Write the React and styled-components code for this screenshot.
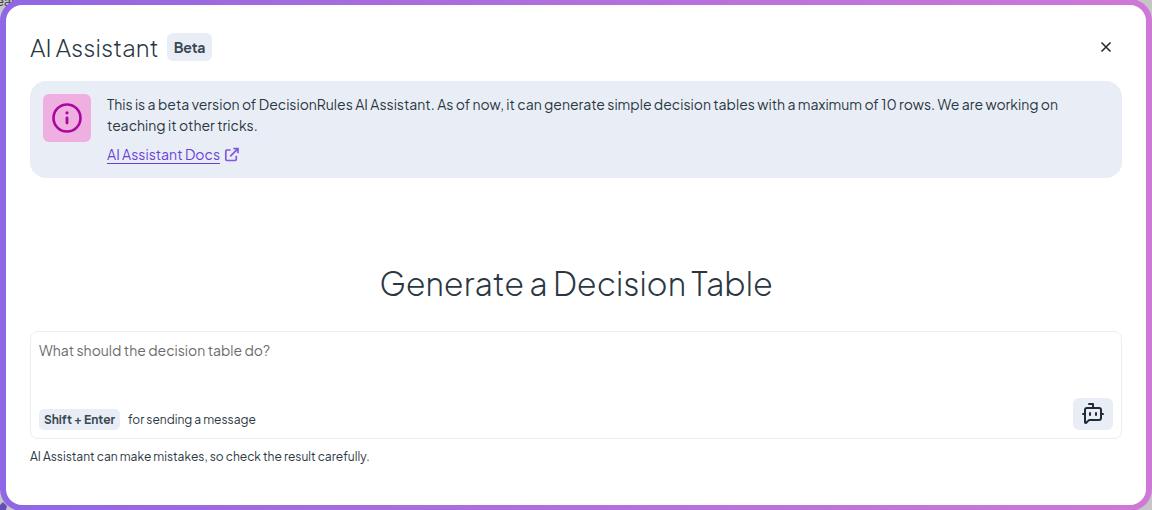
import React from "react";
import styled, { createGlobalStyle } from "styled-components";
import { BotMessageSquare } from "lucide-react";

const GlobalStyle = createGlobalStyle`
  * { box-sizing: border-box; }
  body { margin: 0; overflow: hidden; background: #c6c6c8; }
`;

const Page = styled.div`
  position: relative;
  height: 510px;
  overflow: hidden;
  background: #c6c6c8;
  font-family: "Plus Jakarta Sans", Inter, sans-serif;
  color: #2a3742;
`;

const Behind = styled.span`
  position: absolute;
  top: -7px;
  left: -4px;
  font-size: 13px;
  line-height: 16px;
  color: #333b45;
`;

const BehindMark = styled.svg`
  position: absolute;
  left: 0;
  bottom: 0;
`;

const Frame = styled.div`
  position: relative;
  height: 512px;
  margin-top: -1px;
  padding: 6px;
  border-radius: 22px;
  background: linear-gradient(90deg, #8f66e6 0%, #9a68e0 12%, #cf78d8 100%);
`;

const Dialog = styled.main`
  display: flex;
  flex-direction: column;
  height: 500px;
  padding: 28px 24px 0;
  border-radius: 16px;
  background: #fff;
`;

const Header = styled.header`
  display: flex;
  align-items: center;
  height: 28px;
`;

const Text = styled.span`
  font-size: ${(p) => p.$size}px;
  line-height: ${(p) => p.$line}px;
  font-weight: ${(p) => p.$weight || 400};
  letter-spacing: ${(p) => p.$track || 0}px;
  white-space: nowrap;
`;

const Badge = styled.span`
  display: flex;
  align-items: center;
  justify-content: center;
  width: ${(p) => p.$w}px;
  height: ${(p) => p.$h}px;
  border-radius: ${(p) => p.$r}px;
  background: #e9eef6;
  color: #3a4853;
`;

const TitleBox = styled.div`
  display: flex;
  width: 137px;
`;

const Close = styled.button`
  display: flex;
  margin: 0 10px 0 auto;
  padding: 0;
  border: 0;
  background: none;
`;

const Notice = styled.section`
  display: flex;
  gap: 16px;
  height: 97px;
  margin-top: 20px;
  padding: 13px;
  border-radius: 16px;
  background: #e9eef6;
`;

const InfoTile = styled.div`
  display: grid;
  place-items: center;
  width: 48px;
  height: 48px;
  border-radius: 6px;
  background: #efb0e1;
`;

const NoticeBody = styled.div`
  display: flex;
  flex-direction: column;
  align-items: flex-start;
`;

const DocsLink = styled.a`
  display: flex;
  align-items: center;
  gap: 4px;
  margin-top: 8px;
  color: #6b3fd9;

  ${Text} {
    text-decoration: underline;
    text-decoration-thickness: 1px;
    text-underline-offset: 3px;
  }
`;

const Heading = styled.h1`
  display: flex;
  justify-content: center;
  margin: 84px 0 0;
  height: 45px;
`;

const Prompt = styled.section`
  display: flex;
  flex-direction: column;
  justify-content: space-between;
  height: 108px;
  margin-top: 24px;
  padding: 8px;
  border: 1px solid #e9edf5;
  border-radius: 8px;
`;

const Placeholder = styled.div`
  display: flex;
  color: #6c6c6c;
`;

const PromptFooter = styled.div`
  display: flex;
  align-items: flex-end;
`;

const Hint = styled.div`
  display: flex;
  align-items: center;
  gap: 8px;
`;

const Send = styled.button`
  display: grid;
  place-items: center;
  width: 40px;
  height: 32px;
  margin-left: auto;
  padding: 0;
  border: 0;
  border-radius: 6px;
  background: #e9eef6;
  color: #202b35;
`;

const Disclaimer = styled.footer`
  display: flex;
  margin-top: 9px;
`;

export default function App() {
  return (
    <Page>
      <GlobalStyle />
      <Behind>ear</Behind>
      <BehindMark width="8" height="9" viewBox="0 0 8 9">
        <path d="M0 4L3 1L7 5L6 9H0Z" fill="#6750b5" />
      </BehindMark>
      <Frame>
        <Dialog>
          <Header>
            <TitleBox>
              <Text $size={24} $line={30} $weight={300}>AI Assistant</Text>
            </TitleBox>
            <Badge $w={45} $h={28} $r={6}>
              <Text $size={14} $line={18} $weight={700} $track={-0.1}>Beta</Text>
            </Badge>
            <Close aria-label="Close">
              <svg width="12" height="12" viewBox="0 0 12 12" fill="none" stroke="#202b35" strokeWidth="1.6">
                <path d="M1.5 1.5L10.5 10.5M10.5 1.5L1.5 10.5" />
              </svg>
            </Close>
          </Header>
          <Notice>
            <InfoTile>
              <svg width="32" height="32" viewBox="0 0 32 32" fill="none" stroke="#a9079d">
                <circle cx="16" cy="16" r="13.5" strokeWidth="2.6" />
                <path d="M16 15.8V21" strokeWidth="2.8" strokeLinecap="round" />
                <circle cx="16" cy="10.8" r="1.6" fill="#a9079d" stroke="none" />
              </svg>
            </InfoTile>
            <NoticeBody>
              <Text $size={14} $line={21}>
                This is a beta version of DecisionRules AI Assistant. As of now, it can generate simple decision tables with a maximum of 10 rows. We are working on
              </Text>
              <Text $size={14} $line={21}>teaching it other tricks.</Text>
              <DocsLink>
                <Text $size={14} $line={21}>AI Assistant Docs</Text>
                <svg width="16" height="16" viewBox="0 0 16 16" fill="none" stroke="#8058e0" strokeWidth="1.7">
                  <path d="M6.6 3H3Q1.8 3 1.8 4.2V12.3Q1.8 13.5 3 13.5H11.1Q12.3 13.5 12.3 12.3V8.8M9.4 1.6H14V6.2M13.8 1.8L6.2 9.4" />
                </svg>
              </DocsLink>
            </NoticeBody>
          </Notice>
          <Heading>
            <Text $size={32} $line={43} $weight={300}>Generate a Decision Table</Text>
          </Heading>
          <Prompt>
            <Placeholder>
              <Text $size={14} $line={21}>What should the decision table do?</Text>
            </Placeholder>
            <PromptFooter>
              <Hint>
                <Badge $w={81} $h={21} $r={5}>
                  <Text $size={12} $line={16} $weight={700}>Shift + Enter</Text>
                </Badge>
                <Text $size={12} $line={18}>for sending a message</Text>
              </Hint>
              <Send aria-label="Send">
                <BotMessageSquare size={24} strokeWidth={2} />
              </Send>
            </PromptFooter>
          </Prompt>
          <Disclaimer>
            <Text $size={12} $line={18}>AI Assistant can make mistakes, so check the result carefully.</Text>
          </Disclaimer>
        </Dialog>
      </Frame>
    </Page>
  );
}
